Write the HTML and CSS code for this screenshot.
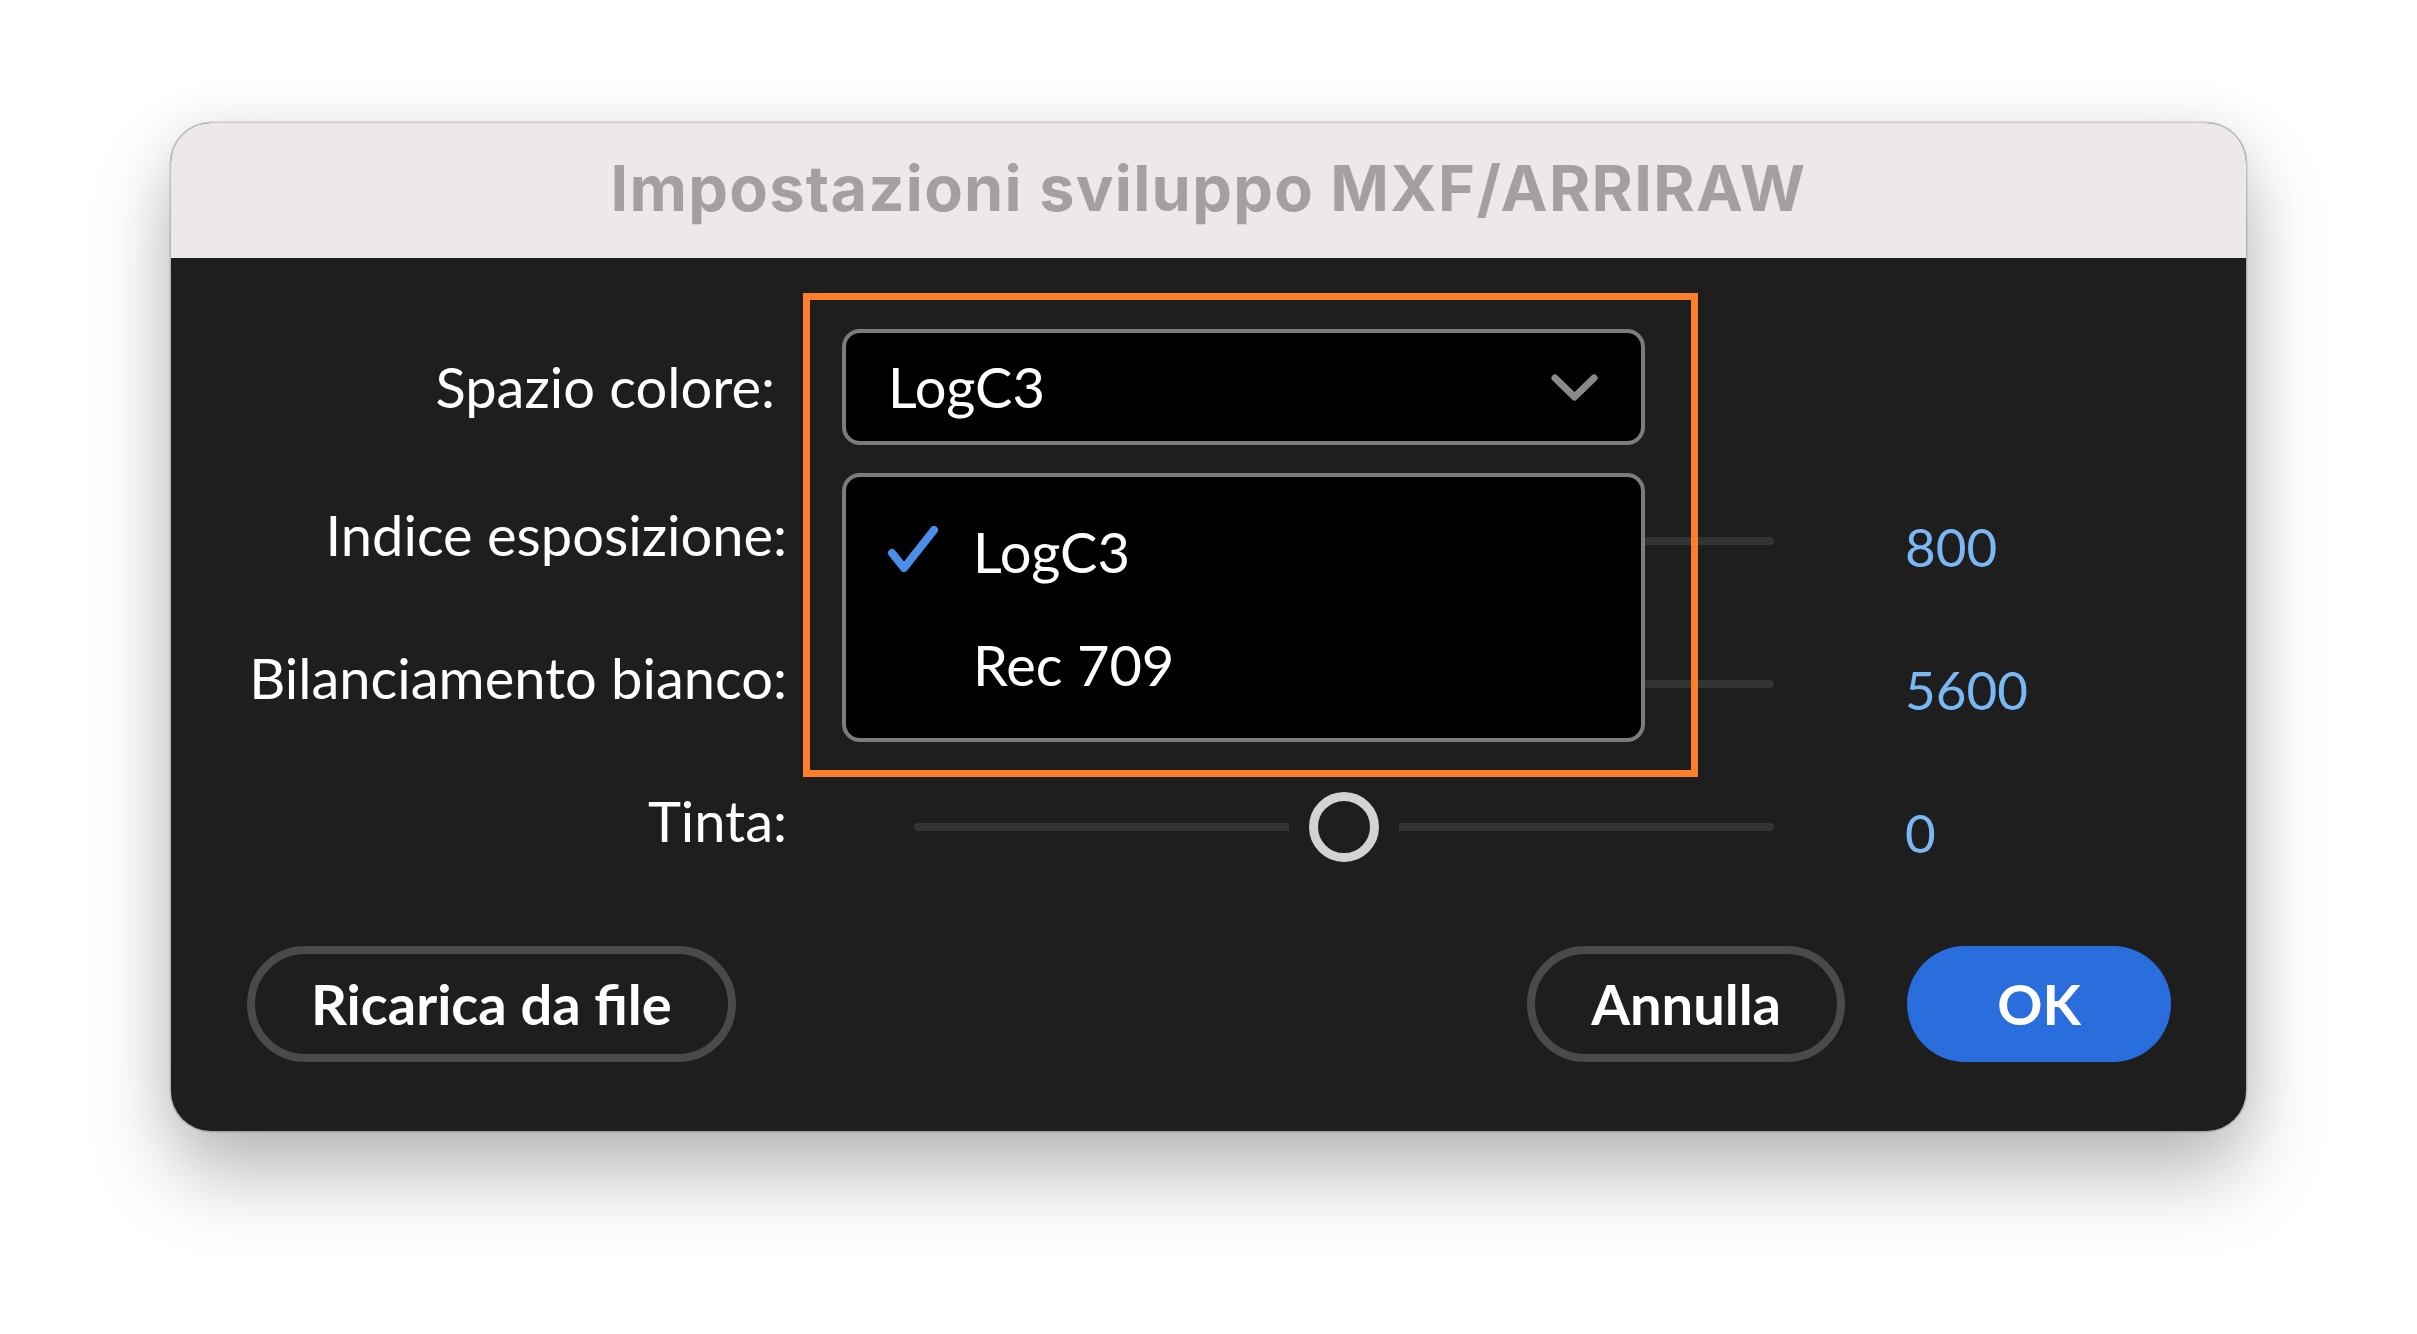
FILE: index.html
```html
<!DOCTYPE html>
<html lang="it">
<head>
<meta charset="utf-8">
<title>Impostazioni sviluppo MXF/ARRIRAW</title>
<link rel="stylesheet" href="styles.css">
</head>
<body>
<div class="stage">
  <div class="dialog">
    <div class="titlebar">Impostazioni sviluppo MXF/ARRIRAW</div>
    <div class="content">
      <div class="form">
        <div class="label label-select">Spazio colore:</div>
        <div class="control control-select">
          <div class="select-wrap">
            <div class="select">
              <span class="select-text">LogC3</span>
              <svg class="chevron" viewBox="0 0 49 29" width="49" height="29" aria-hidden="true">
                <polyline points="5,5 24.5,24 44,5" fill="none" stroke="#8a8a8a" stroke-width="7" stroke-linecap="round" stroke-linejoin="round"/>
              </svg>
            </div>
            <div class="menu">
              <div class="menu-item">
                <svg class="check" viewBox="0 0 52 46" width="52" height="46" aria-hidden="true">
                  <path d="M5 27 L17 42 L47 4" fill="none" stroke="#4a8eea" stroke-width="8" stroke-linecap="round" stroke-linejoin="round"/>
                </svg>
                <span>LogC3</span>
              </div>
              <div class="menu-item">
                <span class="check-space"></span>
                <span>Rec 709</span>
              </div>
            </div>
            <div class="highlight"></div>
          </div>
        </div>
        <div class="value-empty"></div>

        <div class="label">Indice esposizione:</div>
        <div class="control"><div class="track"><div class="thumb"></div></div></div>
        <div class="value">800</div>

        <div class="label">Bilanciamento bianco:</div>
        <div class="control"><div class="track"><div class="thumb"></div></div></div>
        <div class="value">5600</div>

        <div class="label">Tinta:</div>
        <div class="control"><div class="track"><div class="thumb"></div></div></div>
        <div class="value">0</div>
      </div>

      <div class="buttons">
        <button class="btn btn-ghost" type="button">Ricarica da file</button>
        <div class="spacer"></div>
        <button class="btn btn-ghost" type="button">Annulla</button>
        <button class="btn btn-primary" type="button">OK</button>
      </div>
    </div>
  </div>
</div>
</body>
</html>
```

FILE: styles.css
```css
* {
  box-sizing: border-box;
}

html,
body {
  margin: 0;
  padding: 0;
  background: #ffffff;
}

body {
  width: 2417px;
  height: 1334px;
  overflow: hidden;
  font-family: Lato, "Open Sans", "DejaVu Sans", sans-serif;
}

.stage {
  padding: 123px 0 0 171px;
}

.dialog {
  width: 2075px;
  height: 1008px;
  border-radius: 40px;
  background: #1e1e1e;
  display: flex;
  flex-direction: column;
  box-shadow:
    0 45px 80px rgba(0, 0, 0, 0.26),
    0 0 55px rgba(0, 0, 0, 0.08),
    0 0 0 1.5px rgba(0, 0, 0, 0.16);
}

.titlebar {
  height: 135px;
  flex: none;
  background: #ece8ec;
  border-radius: 40px 40px 0 0;
  display: flex;
  align-items: center;
  justify-content: center;
  padding-bottom: 5px;
  font-family: Inter, "Open Sans", sans-serif;
  font-weight: 700;
  font-size: 63px;
  letter-spacing: 1.3px;
  color: #a39fa3;
  line-height: 1;
}

.content {
  flex: 1;
  padding: 71px 75px 69px 76px;
  display: flex;
  flex-direction: column;
}

.form {
  display: grid;
  grid-template-columns: 540px 932px 1fr;
  grid-template-rows: 140px 143px 143px 143px;
  column-gap: 55px;
}

.label {
  display: flex;
  align-items: center;
  justify-content: flex-end;
  color: #ffffff;
  font-size: 56px;
  line-height: 1.2;
  padding-bottom: 12px;
  white-space: nowrap;
}

.label-select {
  height: 116px;
  padding-bottom: 0;
  padding-right: 12px;
}

.control {
  display: flex;
  align-items: center;
}

.control-select {
  align-items: flex-start;
}

.select-wrap {
  position: relative;
  width: 803px;
  height: 116px;
}

.select {
  width: 100%;
  height: 100%;
  background: #000000;
  border: 4px solid #7c7c7c;
  border-radius: 18px;
  display: flex;
  align-items: center;
  justify-content: space-between;
  padding: 0 42px 0 42px;
  color: #ffffff;
  font-size: 56px;
  line-height: 1.2;
}

.chevron {
  display: block;
  flex: none;
}

.menu {
  position: absolute;
  left: 0;
  top: 144px;
  width: 803px;
  height: 269px;
  background: #000000;
  border: 4px solid #7c7c7c;
  border-radius: 18px;
  padding: 18px 0 0 41px;
  color: #ffffff;
  font-size: 56px;
  line-height: 1.2;
}

.menu-item {
  height: 113px;
  display: flex;
  align-items: center;
  gap: 34px;
}

.check {
  display: block;
  flex: none;
  margin-top: -6px;
}

.check-space {
  width: 52px;
  flex: none;
}

.highlight {
  position: absolute;
  left: -39px;
  top: -36px;
  width: 895px;
  height: 484px;
  border: 7px solid #fd7f2c;
  pointer-events: none;
}

.track {
  margin-left: 72px;
  width: 860px;
  height: 8px;
  border-radius: 4px;
  background: #333333;
  display: flex;
  align-items: center;
  justify-content: center;
}

.thumb {
  flex: none;
  width: 70px;
  height: 70px;
  border-radius: 50%;
  border: 9px solid #d3d3d3;
  background: #1e1e1e;
  box-shadow: 0 0 0 20px #1e1e1e;
}

.value {
  display: flex;
  align-items: center;
  margin-left: 76px;
  padding-top: 12px;
  color: #7ab7f5;
  font-size: 53px;
  line-height: 1.2;
}

.buttons {
  margin-top: 48px;
  display: flex;
  align-items: center;
  gap: 62px;
}

.spacer {
  flex: 1;
}

.btn {
  height: 116px;
  margin: 0;
  font-family: inherit;
  font-weight: 700;
  font-size: 56px;
  line-height: 1.2;
  color: #ffffff;
  border-radius: 58px;
  display: flex;
  align-items: center;
  justify-content: center;
  cursor: default;
}

.btn-ghost {
  background: transparent;
  border: 8px solid #4a4a4a;
  padding: 0 56px;
}

.btn-primary {
  background: #2a6ede;
  border: none;
  min-width: 264px;
  padding: 0 40px;
}
```
